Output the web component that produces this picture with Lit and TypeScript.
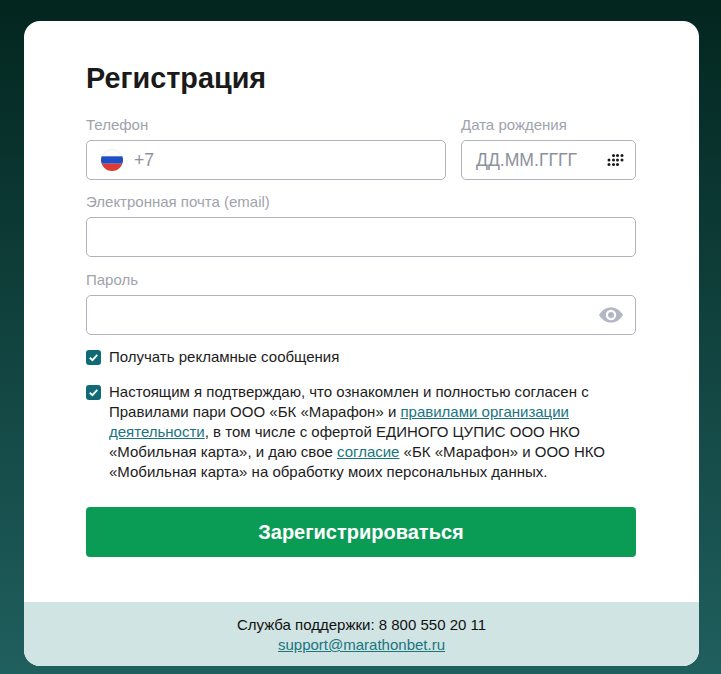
import { LitElement, html, svg, css } from "lit";
import { customElement } from "lit/decorators.js";

const check = html`<svg class="tick" viewBox="0 0 16 16" aria-hidden="true"><path d="M4 8.2 6.9 10.8 12 5.2" fill="none" stroke="#fff" stroke-width="2"/></svg>`;

const dots: [number, number][] = [
  [6.5, 1.5], [10.5, 1.5], [15, 1.5],
  [2, 6], [6.5, 6], [10.5, 6], [15, 6],
  [2, 10.5], [6.5, 10.5], [10.5, 10.5],
];

@customElement("app-root")
export class AppRoot extends LitElement {
  static styles = css`
    :host {
      display: block;
      height: 674px;
      overflow: hidden;
      background: linear-gradient(180deg, #03261f 0%, #1f5f5e 100%);
      font-family: "Liberation Sans", Arial, sans-serif;
      color: #1c1c1c;
    }
    .wrap { padding: 21px 22px 0 24px; }
    .card {
      background: #fff;
      border-radius: 16px;
      overflow: hidden;
      height: 645px;
      display: flex;
      flex-direction: column;
    }
    .body { flex: 1; padding: 41px 63px 0 62px; display: flex; flex-direction: column; }
    h1 { margin: 0 0 22px; font-size: 28.8px; line-height: 32px; font-weight: 700; color: #1a1a1a; }
    .row { display: flex; gap: 15px; }
    .field { display: flex; flex-direction: column; flex: 1; min-width: 0; }
    .single { flex: none; }
    .date { flex: 0 0 175px; }
    label { font-size: 15px; line-height: 17px; color: #9fa3ad; margin-bottom: 7px; display: block; }
    .input {
      height: 40px;
      box-sizing: border-box;
      border: 1px solid #b0b3bb;
      border-radius: 5px;
      display: flex;
      align-items: center;
      justify-content: space-between;
      padding: 0 10px 0 14px;
      font-size: 17.6px;
      color: #8d919c;
      background: #fff;
    }
    .phone { justify-content: flex-start; gap: 11px; }
    .pw { padding-right: 12px; }
    .mt { margin-top: 13px; }
    .mt2 { margin-top: 14px; }
    .check { display: flex; gap: 8px; font-size: 15px; line-height: 20px; color: #1c1c1c; }
    .box { flex: none; width: 15px; height: 15px; margin-top: 3px; border-radius: 3px; background: #0f6a73; }
    .tick { display: block; width: 15px; height: 15px; }
    .c1 { margin-top: 12px; }
    .c2 { margin-top: 15px; }
    a { color: #1a7580; text-decoration: underline; }
    button {
      margin-top: 25px;
      height: 50px;
      width: 100%;
      border: 0;
      border-radius: 4px;
      background: #0a9c55;
      color: #fff;
      font: 700 20px "Liberation Sans", Arial, sans-serif;
    }
    footer {
      height: 64px;
      background: #d0e4e3;
      text-align: center;
      font-size: 15px;
      line-height: 20px;
      padding-top: 13px;
      box-sizing: border-box;
      color: #111;
    }
    footer div { display: block; }
    svg { display: block; flex: none; }
  `;

  render() {
    return html`
      <div class="wrap">
        <div class="card">
          <div class="body">
            <h1>Регистрация</h1>
            <div class="row">
              <div class="field">
                <label>Телефон</label>
                <div class="input phone">
                  <svg width="22" height="22" viewBox="0 0 22 22" aria-hidden="true">
                    <defs><clipPath id="fc"><circle cx="11" cy="11" r="11"/></clipPath></defs>
                    <g clip-path="url(#fc)">
                      <rect width="22" height="7.3" fill="#fbfbfb"/>
                      <rect y="7.3" width="22" height="7.4" fill="#1f4fc4"/>
                      <rect y="14.7" width="22" height="7.3" fill="#df3d33"/>
                    </g>
                    <circle cx="11" cy="11" r="10.6" fill="none" stroke="#000" stroke-opacity="0.06" stroke-width="0.8"/>
                  </svg>
                  <span>+7</span>
                </div>
              </div>
              <div class="field date">
                <label>Дата рождения</label>
                <div class="input">
                  <span>ДД.ММ.ГГГГ</span>
                  <svg width="18" height="12" viewBox="0 0 18 12" fill="#1a1a1a" aria-hidden="true">
                    ${dots.map(([x, y]) => svg`<circle cx=${x} cy=${y} r="1.5"></circle>`)}
                  </svg>
                </div>
              </div>
            </div>
            <div class="field single mt">
              <label>Электронная почта (email)</label>
              <div class="input"></div>
            </div>
            <div class="field single mt2">
              <label>Пароль</label>
              <div class="input pw">
                <span></span>
                <svg width="24" height="16" viewBox="0 0 24 16" aria-hidden="true">
                  <path d="M0 8C3 3 7 .5 12 .5S21 3 24 8c-3 5-7 7.5-12 7.5S3 13 0 8Z" fill="#b3b6c4"/>
                  <circle cx="12" cy="8" r="5.2" fill="#fff"/>
                  <circle cx="12" cy="8" r="3" fill="#b3b6c4"/>
                </svg>
              </div>
            </div>
            <div class="check c1"><span class="box">${check}</span><span>Получать рекламные сообщения</span></div>
            <div class="check c2"><span class="box">${check}</span><span>Настоящим я подтверждаю, что ознакомлен и полностью согласен с Правилами пари ООО «БК «Марафон» и <a href="#">правилами организации деятельности</a>, в том числе с офертой ЕДИНОГО ЦУПИС ООО НКО «Мобильная карта», и даю свое <a href="#">согласие</a> «БК «Марафон» и ООО НКО «Мобильная карта» на обработку моих персональных данных.</span></div>
            <button>Зарегистрироваться</button>
          </div>
          <footer>
            <div>Служба поддержки: 8 800 550 20 11</div>
            <div><a href="#">support@marathonbet.ru</a></div>
          </footer>
        </div>
      </div>
    `;
  }
}
